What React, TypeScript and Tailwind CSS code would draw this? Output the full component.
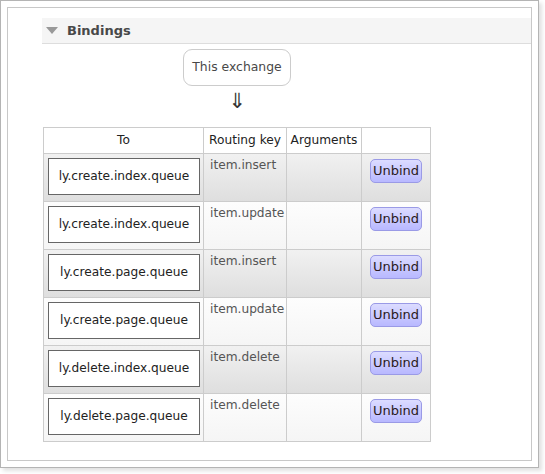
import React from "react";

const bindings = [
  { to: "ly.create.index.queue", key: "item.insert" },
  { to: "ly.create.index.queue", key: "item.update" },
  { to: "ly.create.page.queue", key: "item.insert" },
  { to: "ly.create.page.queue", key: "item.update" },
  { to: "ly.delete.index.queue", key: "item.delete" },
  { to: "ly.delete.page.queue", key: "item.delete" },
];

export default function App() {
  return (
    <div
      className="w-[545px] h-[474px] bg-white text-[12px] text-[#484848]"
      style={{ fontFamily: '"DejaVu Sans", Verdana, sans-serif' }}
    >
      {/* Outer window frame */}
      <div className="w-[539px] h-[468px] border border-[#b4b4b4] bg-white p-[6px] shadow-[3px_3px_4px_rgba(0,0,0,0.12)]">
        <div className="h-full w-full border border-[#c8c8c8] pl-[34px] pt-[10px]">
          {/* Section header */}
          <div className="flex h-[26px] items-center border-b border-[#dddddd] bg-[#f5f5f5]">
            <span className="ml-[4px] mr-[9px] h-0 w-0 border-l-[6px] border-r-[6px] border-t-[7px] border-l-transparent border-r-transparent border-t-[#999999]" />
            <span className="text-[13px] font-bold text-[#484848]">Bindings</span>
          </div>

          {/* Exchange node */}
          <div className="ml-[141px] mt-[5px] flex h-[37px] w-[108px] items-center justify-center rounded-[9px] border border-[#cccccc] text-[12.4px] text-[#484848]">
            This exchange
          </div>
          <div className="ml-[141px] mt-[3px] w-[108px] text-center text-[21px] leading-[24px] text-[#333]">
            ⇓
          </div>

          {/* Bindings table */}
          <table className="ml-[1px] mt-[14px] table-fixed border-collapse text-[12.2px]">
            <thead>
              <tr className="h-[26px] bg-white text-[#222]">
                <th className="w-[160px] border border-[#cccccc] font-normal">To</th>
                <th className="w-[83px] border border-[#cccccc] font-normal">Routing key</th>
                <th className="w-[75px] border border-[#cccccc] font-normal">Arguments</th>
                <th className="w-[69px] border border-[#cccccc] font-normal"></th>
              </tr>
            </thead>
            <tbody>
              {bindings.map((b, i) => (
                <tr
                  key={i}
                  className={`h-[48px] ${
                    i % 2 === 0
                      ? "bg-[linear-gradient(#f1f1f1,#dedede)]"
                      : "bg-[linear-gradient(#fdfdfd,#f5f5f5)]"
                  }`}
                >
                  <td className="border border-[#cccccc] pl-[4px] pr-[2px] pt-[4px] pb-[5px] align-top">
                    <div className="flex h-[37px] w-[152px] items-center justify-center border border-[#666666] bg-white text-[#222]">
                      {b.to}
                    </div>
                  </td>
                  <td className="border border-[#cccccc] pl-[6px] pt-[2px] align-top text-[#555]">
                    {b.key}
                  </td>
                  <td className="border border-[#cccccc]"></td>
                  <td className="border border-[#cccccc] pl-[8px] pt-[5px] align-top">
                    <button className="h-[24px] w-[52px] rounded-[5px] border border-[#9a9ae6] bg-[linear-gradient(#dcdcff,#b8b8ff)] text-[13px] text-[#2a1a1a]">
                      Unbind
                    </button>
                  </td>
                </tr>
              ))}
            </tbody>
          </table>
        </div>
      </div>
    </div>
  );
}
